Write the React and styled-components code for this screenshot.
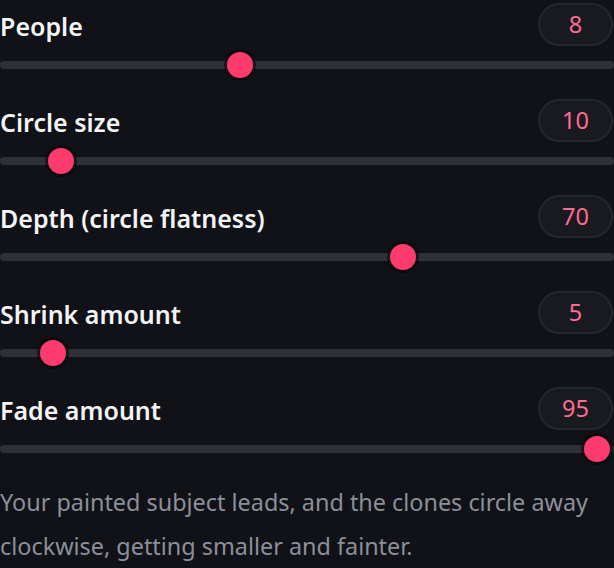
import React from 'react';
import styled, { createGlobalStyle } from 'styled-components';

const GlobalStyle = createGlobalStyle`
  html, body {
    margin: 0;
    padding: 0;
    background: #111217;
  }
  body {
    font-family: "Noto Sans", "Open Sans", sans-serif;
    color: #f1f2f5;
  }
`;

const Panel = styled.div`
  width: 614px;
  padding-top: 3px;
  display: flex;
  flex-direction: column;
  gap: 21px;
`;

const Control = styled.div`
  display: flex;
  flex-direction: column;
  gap: 7px;
`;

const Header = styled.div`
  display: flex;
  align-items: center;
  justify-content: space-between;
  height: 42px;
`;

const Label = styled.span`
  font-size: 25px;
  font-weight: 600;
  color: #f3f4f6;
  padding-top: 4px;
`;

const Badge = styled.span`
  box-sizing: border-box;
  width: 75px;
  height: 43px;
  margin-right: 1px;
  border-radius: 22px;
  border: 2px solid #25272e;
  background: #181a20;
  color: #ff6b95;
  font-size: 23.5px;
  display: flex;
  align-items: center;
  justify-content: center;
`;

const TrackArea = styled.div`
  position: relative;
  height: 26px;
  display: flex;
  align-items: center;
`;

const Track = styled.div`
  width: 100%;
  height: 8px;
  border-radius: 4px;
  background: #303137;
`;

const Thumb = styled.div`
  position: absolute;
  top: 0;
  width: 26px;
  height: 26px;
  margin-left: -13px;
  border-radius: 50%;
  background: #ff3b6d;
  box-shadow: 0 0 0 3px rgba(5, 6, 9, 0.55);
`;

const Note = styled.p`
  margin: -3px 0 0;
  font-size: 23.4px;
  line-height: 44px;
  color: #8c8f99;
`;

const controls = [
  { label: 'People', value: 8, x: 240 },
  { label: 'Circle size', value: 10, x: 61 },
  { label: 'Depth (circle flatness)', value: 70, x: 403 },
  { label: 'Shrink amount', value: 5, x: 53 },
  { label: 'Fade amount', value: 95, x: 597 },
];

export default function App() {
  return (
    <>
      <GlobalStyle />
      <Panel>
        {controls.map((c) => (
          <Control key={c.label}>
            <Header>
              <Label>{c.label}</Label>
              <Badge>{c.value}</Badge>
            </Header>
            <TrackArea>
              <Track />
              <Thumb style={{ left: `${c.x}px` }} />
            </TrackArea>
          </Control>
        ))}
        <Note>
          Your painted subject leads, and the clones circle away clockwise, getting smaller and fainter.
        </Note>
      </Panel>
    </>
  );
}
